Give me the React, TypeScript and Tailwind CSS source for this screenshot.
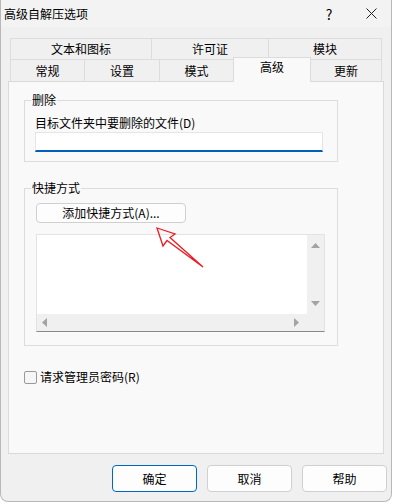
import React from "react";

const font = { fontFamily: '"Noto Sans CJK SC", "Noto Sans", sans-serif' };

function Tab({ label, w, selected }: { label: string; w: string; selected?: boolean }) {
  return null as any;
}

export default function App() {
  return (
    <div className="relative w-[395px] h-[504px] bg-[#ffffff] text-[12px] leading-[16px] text-black" style={font}>
      <div className="w-[392px] h-[502px] bg-[#f0f0f0] border-l border-r border-b border-[#b8b8b8] rounded-b-[8px] flex flex-col overflow-hidden">
        {/* title bar */}
        <div className="h-[27px] flex items-center bg-[#f3f3f3]">
          <div className="pl-[3px] flex-1">高级自解压选项</div>
          <div className="w-[20px] text-center text-[14px] mr-[26px]">?</div>
          <div className="w-[12px] mr-[14px] flex items-center justify-center">
            <svg width="11" height="11" viewBox="0 0 11 11">
              <path d="M0.5 0.5 L10.5 10.5 M10.5 0.5 L0.5 10.5" stroke="#222" strokeWidth="1" fill="none" />
            </svg>
          </div>
        </div>

        {/* tabs row 1 */}
        <div className="mt-[11px] ml-[9px] flex h-[21px]">
          <div className="w-[141px] h-[21px] border-t border-l border-[#dcdcdc] flex items-center justify-center">文本和图标</div>
          <div className="w-[117px] h-[21px] border-t border-l border-[#dcdcdc] flex items-center justify-center">许可证</div>
          <div className="w-[114px] h-[21px] border-t border-l border-r border-[#dcdcdc] flex items-center justify-center">模块</div>
        </div>
        {/* tabs row 2 */}
        <div className="ml-[9px] flex items-end h-[22px]">
          <div className="w-[74px] h-[22px] border-t border-l border-[#dcdcdc] flex items-center justify-center">常规</div>
          <div className="w-[75px] h-[22px] border-t border-l border-[#dcdcdc] flex items-center justify-center">设置</div>
          <div className="w-[74px] h-[22px] border-t border-l border-[#dcdcdc] flex items-center justify-center">模式</div>
          <div className="relative z-10 w-[78px] h-[25px] -mb-[1px] bg-[#f9f9f9] border-t border-l border-r border-[#dcdcdc] flex justify-center pt-[1px]">高级</div>
          <div className="w-[71px] h-[22px] border-t border-r border-[#dcdcdc] flex items-center justify-center">更新</div>
        </div>

        {/* panel */}
        <div className="ml-[7px] w-[376px] h-[373px] border border-[#dadada] bg-[#f9f9f9] flex flex-col">
          {/* group 1 */}
          <div className="relative ml-[15px] mt-[18px] w-[314px] h-[62px] border border-[#dcdcdc] pl-[10px] pt-[14px]">
            <span className="absolute -top-[9px] left-[6px] bg-[#f9f9f9] px-[1px]">删除</span>
            <div>目标文件夹中要删除的文件(D)</div>
            <div className="mt-[1px] w-[288px] h-[20px] bg-white border border-[#e5e5e5] border-b-2 border-b-[#005fb8]" />
          </div>

          {/* group 2 */}
          <div className="relative ml-[15px] mt-[26px] w-[314px] h-[158px] border border-[#dcdcdc] pl-[11px] pt-[14px]">
            <span className="absolute -top-[9px] left-[6px] bg-[#f9f9f9] px-[1px]">快捷方式</span>
            <div className="w-[150px] h-[20px] bg-[#fdfdfd] border border-[#d0d0d0] rounded-[4px] flex items-center justify-center">
              添加快捷方式(A)...
            </div>
            <div className="mt-[11px] w-[289px] h-[98px] border border-[#e3e3e3] border-b-[#8a8a8a] flex flex-col">
              <div className="flex-1 flex">
                <div className="flex-1 bg-white" />
                <div className="w-[17px] bg-[#f0f0f0] flex flex-col items-center justify-between pt-[8px] pb-[8px]">
                  <svg width="9" height="5" viewBox="0 0 9 5"><path d="M4.5 0 L9 5 L0 5 Z" fill="#a3a3a3" /></svg>
                  <svg width="9" height="5" viewBox="0 0 9 5"><path d="M0 0 L9 0 L4.5 5 Z" fill="#a3a3a3" /></svg>
                </div>
              </div>
              <div className="h-[17px] flex bg-[#f0f0f0]">
                <div className="flex-1 flex items-center justify-between pl-[5px] pr-[8px]">
                  <svg width="5" height="9" viewBox="0 0 5 9"><path d="M0 4.5 L5 0 L5 9 Z" fill="#a3a3a3" /></svg>
                  <svg width="5" height="9" viewBox="0 0 5 9"><path d="M5 4.5 L0 0 L0 9 Z" fill="#a3a3a3" /></svg>
                </div>
                <div className="w-[17px]" />
              </div>
            </div>
          </div>

          {/* checkbox */}
          <div className="ml-[15px] mt-[23px] flex items-center">
            <div className="w-[13px] h-[13px] border border-[#9a9a9a] rounded-[2px] bg-[#f6f6f6]" />
            <span className="ml-[3px]">请求管理员密码(R)</span>
          </div>
        </div>

        {/* buttons */}
        <div className="mt-[11px] flex justify-end gap-[10px] pr-[4px]">
          <div className="w-[85px] h-[27px] bg-[#fdfdfd] border border-[#0067c0] rounded-[4px] flex items-center justify-center">确定</div>
          <div className="w-[85px] h-[27px] bg-[#fdfdfd] border border-[#d0d0d0] rounded-[4px] flex items-center justify-center">取消</div>
          <div className="w-[85px] h-[27px] bg-[#fdfdfd] border border-[#d0d0d0] rounded-[4px] flex items-center justify-center">帮助</div>
        </div>
      </div>

      {/* red annotation arrow */}
      <svg className="absolute left-0 top-0 pointer-events-none" width="395" height="504" viewBox="0 0 395 504">
        <path
          d="M157 228 L175 234 L170 237.5 L203 267 L167 240.5 L163 246 Z"
          fill="none"
          stroke="#ec1c24"
          strokeWidth="1.3"
          strokeLinejoin="miter"
        />
      </svg>
    </div>
  );
}
